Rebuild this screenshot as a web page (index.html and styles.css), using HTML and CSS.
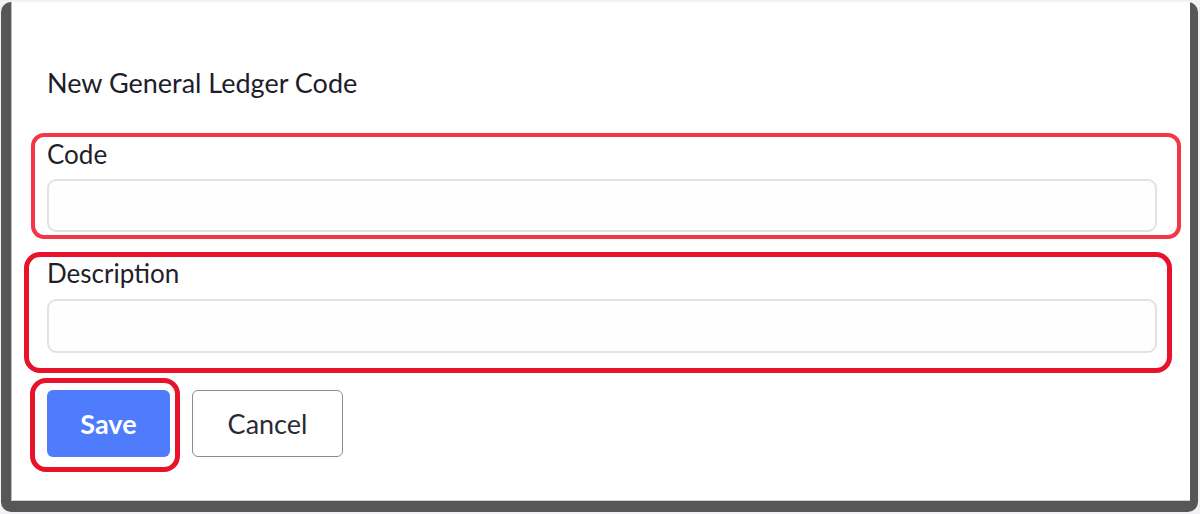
FILE: index.html
```html
<!DOCTYPE html>
<html lang="en">
<head>
  <meta charset="UTF-8">
  <meta name="viewport" content="width=device-width, initial-scale=1.0">
  <title>New General Ledger Code</title>
  <link rel="stylesheet" href="styles.css">
</head>
<body>
  <div class="frame">
    <div class="panel">
      <h1 class="title">New General Ledger Code</h1>

      <form class="ledger-form" onsubmit="return false;">
        <!-- highlighted: code field -->
        <div class="field mark mark-code">
          <label for="code">Code</label>
          <input id="code" type="text">
        </div>

        <!-- highlighted: description field -->
        <div class="field field-desc mark mark-desc">
          <label for="description">Description</label>
          <input id="description" type="text">
        </div>

        <div class="actions">
          <span class="mark mark-save">
            <button type="submit" class="btn btn-primary">Save</button>
          </span>
          <button type="button" class="btn btn-secondary">Cancel</button>
        </div>
      </form>
    </div>
  </div>
</body>
</html>
```

FILE: styles.css
```css
*, *::before, *::after {
  margin: 0;
  padding: 0;
  box-sizing: border-box;
}

body {
  font-family: Lato, 'Open Sans', sans-serif;
  background-color: #f2f2f5;
  color: #1f1f2b;
}

.frame {
  margin: 2px 2px 2px 1px;
  padding: 0 8px 11px 10px;
  background-color: #575757;
  border-radius: 10px;
}

.panel {
  background-color: white;
  border-left: 1px solid #bdbdbd;
  border-bottom: 1px solid #cfcfcf;
  padding: 66px 33px 43px 35px;
}

.title {
  font-size: 27px;
  font-weight: 400;
  line-height: 30px;
  color: #1d1d2c;
}

.ledger-form {
  display: flex;
  flex-direction: column;
  margin-top: 41px;
}

.field {
  display: flex;
  flex-direction: column;
  gap: 10px;
}

.field-desc {
  margin-top: 26px;
  gap: 11px;
}

.field label {
  font-size: 26px;
  line-height: 30px;
  color: #1f1f2b;
}

.field input {
  height: 53px;
  border: 2px solid #e2e2e2;
  border-radius: 9px;
  background-color: #fefefe;
  font: inherit;
  padding: 0 14px;
}

.field-desc input {
  height: 54px;
}

.actions {
  display: flex;
  gap: 22px;
  margin-top: 37px;
}

.btn {
  height: 67px;
  font-family: Lato, 'Open Sans', sans-serif;
  font-size: 27px;
  border-radius: 6px;
  cursor: pointer;
}

.btn-primary {
  display: block;
  width: 123px;
  background-color: #4e7cfd;
  color: white;
  font-weight: 700;
  border: none;
}

.btn-secondary {
  width: 151px;
  background-color: white;
  color: #2b2b35;
  border: 1.5px solid #8d8d8d;
}

/* red annotation boxes laid over the form */
.mark {
  position: relative;
}

.mark::after {
  content: '';
  position: absolute;
  pointer-events: none;
}

.mark-code::after {
  top: -6px;
  left: -16px;
  right: -24px;
  bottom: -7px;
  border: 4px solid #f43747;
  border-radius: 13px;
}

.mark-desc::after {
  top: -6px;
  left: -23px;
  right: -15px;
  bottom: -20px;
  border: 5px solid #e8122b;
  border-radius: 16px;
}

.mark-save::after {
  top: -12px;
  left: -17px;
  right: -10px;
  bottom: -15px;
  border: 5px solid #e8122b;
  border-radius: 16px;
}
```
